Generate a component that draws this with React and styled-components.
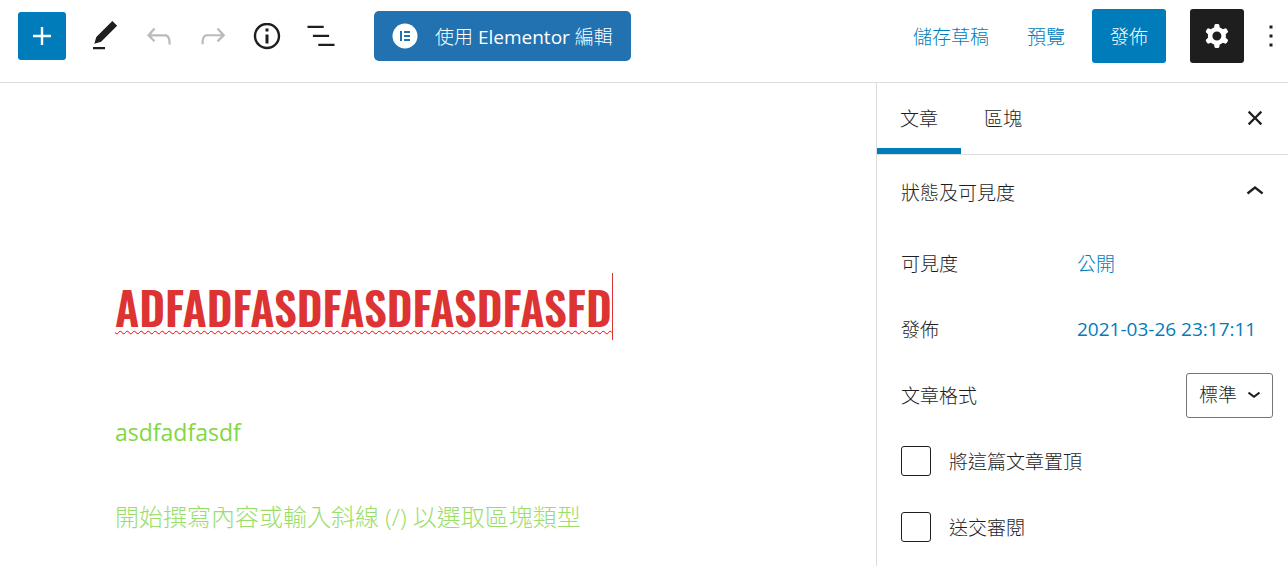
import React, { useState } from 'react';
import styled, { createGlobalStyle } from 'styled-components';

const icons = {
  plus: 'M18 11.2h-5.2V6h-1.6v5.2H6v1.6h5.2V18h1.6v-5.2H18z',
  edit: 'M20.1 5.1L16.9 2 6.2 12.7l-1.3 4.4 4.5-1.3L20.1 5.1zM4 20.8h8v-1.5H4v1.5z',
  undo: 'M18.3 11.7c-.6-.6-1.4-.9-2.3-.9H6.7l2.9-3.3-1.1-1-4.5 5L8.5 16l1-1-2.7-2.7H16c.5 0 .9.2 1.3.5 1 1 1 3.4 1 4.5v.3h1.5v-.2c0-1.5 0-4.3-1.5-5.7z',
  redo: 'M15.6 6.5l-1.1 1 2.9 3.3H8c-.9 0-1.7.3-2.3.9-1.4 1.5-1.4 4.2-1.4 5.6v.2h1.5v-.3c0-1.1 0-3.5 1-4.5.3-.3.7-.5 1.3-.5h9.2L14.5 15l1.1 1.1 4.6-4.6-4.6-5z',
  info: 'M12 3.2c-4.8 0-8.8 3.9-8.8 8.8 0 4.8 3.9 8.8 8.8 8.8 4.8 0 8.8-3.9 8.8-8.8 0-4.8-4-8.8-8.8-8.8zm0 16c-4 0-7.2-3.3-7.2-7.2C4.8 8 8 4.8 12 4.8s7.2 3.3 7.2 7.2c0 4-3.2 7.2-7.2 7.2zM11 17h2v-6h-2v6zm0-8h2V7h-2v2z',
  outline: 'M13.8 5.2H3v1.5h10.8V5.2zm-3.6 12v1.5H21v-1.5H10.2zm7.2-6H6.6v1.5h10.8v-1.5z',
  cog: 'M10.289 4.836A1 1 0 0111.275 4h1.306a1 1 0 01.987.836l.244 1.466c.787.26 1.503.679 2.108 1.218l1.393-.522a1 1 0 011.216.437l.653 1.13a1 1 0 01-.23 1.273l-1.148.944a6.025 6.025 0 010 2.435l1.149.946a1 1 0 01.23 1.272l-.653 1.13a1 1 0 01-1.216.437l-1.394-.522c-.605.54-1.32.958-2.108 1.218l-.244 1.466a1 1 0 01-.987.836h-1.306a1 1 0 01-.986-.836l-.244-1.466a5.995 5.995 0 01-2.108-1.218l-1.394.522a1 1 0 01-1.217-.436l-.653-1.131a1 1 0 01.23-1.272l1.149-.946a6.026 6.026 0 010-2.435l-1.148-.944a1 1 0 01-.23-1.272l.653-1.131a1 1 0 011.217-.437l1.393.522a5.994 5.994 0 012.108-1.218l.244-1.466zM14.929 12a3 3 0 11-6 0 3 3 0 016 0z',
  more: 'M13 19h-2v-2h2v2zm0-6h-2v-2h2v2zm0-6h-2V5h2v2z',
  close: 'M12 13.06l3.712 3.713 1.061-1.06L13.061 12l3.712-3.712-1.06-1.06L12 10.938 8.288 7.227l-1.061 1.06L10.939 12l-3.712 3.712 1.06 1.061L12 13.061z',
  chevronUp: 'M6.5 12.4L12 8l5.5 4.4-.9 1.2L12 10l-4.5 3.6-1-1.2z',
};

function Icon({ name }) {
  return (
    <IconSvg viewBox="0 0 24 24" aria-hidden="true">
      <path fillRule="evenodd" d={icons[name]} />
    </IconSvg>
  );
}

export default function App() {
  const [title, setTitle] = useState('ADFADFASDFASDFASDFASFD');
  const [texto, setTexto] = useState('');
  const [tab, setTab] = useState('post');
  const [panelOpen, setPanelOpen] = useState(true);
  const [sticky, setSticky] = useState(false);
  const [review, setReview] = useState(false);

  return (
    <>
      <GlobalStyle />
      <Editor>
        <Header>
          <InserterButton aria-label="新增區塊"><Icon name="plus" /></InserterButton>
          <Tools>
            <ToolButton aria-label="工具"><Icon name="edit" /></ToolButton>
            <ToolButton aria-label="復原" disabled><Icon name="undo" /></ToolButton>
            <ToolButton aria-label="重做" disabled><Icon name="redo" /></ToolButton>
            <ToolButton aria-label="詳細資料"><Icon name="info" /></ToolButton>
            <ToolButton aria-label="大綱"><Icon name="outline" /></ToolButton>
          </Tools>
          <ElementorButton>
            <ElementorLogo viewBox="0 0 26 26" aria-hidden="true">
              <circle cx="13" cy="13" r="12.5" fill="#fff" />
              <path fill="#2271b1" d="M8 8h2v10H8zM12 8h6v2h-6zM12 12h6v2h-6zM12 16h6v2h-6z" />
            </ElementorLogo>
            <span>使用 <Latin>Elementor</Latin> 編輯</span>
          </ElementorButton>
          <Settings>
            <TextButton>儲存草稿</TextButton>
            <TextButton>預覽</TextButton>
            <PublishButton>發佈</PublishButton>
            <CogButton aria-label="設定"><Icon name="cog" /></CogButton>
            <MoreButton aria-label="選項"><Icon name="more" /></MoreButton>
          </Settings>
        </Header>

        <Body>
          <Canvas>
            <TitleInput
              aria-label="新增標題"
              spellCheck={false}
              value={title}
              onChange={(e) => setTitle(e.target.value)}
            />
            <Paragraph>asdfadfasdf</Paragraph>
            <BlockInput
              aria-label="區塊"
              placeholder="開始撰寫內容或輸入斜線 (/) 以選取區塊類型"
              value={texto}
              onChange={(e) => setTexto(e.target.value)}
            />
          </Canvas>

          <Sidebar>
            <Tabs>
              <Tab $active={tab === 'post'} onClick={() => setTab('post')}>文章</Tab>
              <Tab $active={tab === 'block'} onClick={() => setTab('block')}>區塊</Tab>
              <CloseButton aria-label="關閉設定"><Icon name="close" /></CloseButton>
            </Tabs>

            <PanelTitle onClick={() => setPanelOpen(!panelOpen)}>
              狀態及可見度
              <Icon name="chevronUp" />
            </PanelTitle>

            {panelOpen && (
              <>
                <Row>
                  <RowLabel>可見度</RowLabel>
                  <LinkButton>公開</LinkButton>
                </Row>
                <Row>
                  <RowLabel>發佈</RowLabel>
                  <LinkButton><Latin>2021-03-26 23:17:11</Latin></LinkButton>
                </Row>
                <Row>
                  <RowLabel as="label" htmlFor="format">文章格式</RowLabel>
                  <SelectWrap>
                    <Select id="format" defaultValue="standard">
                      <option value="standard">標準</option>
                      <option value="image">圖片</option>
                    </Select>
                    <SelectArrow viewBox="0 0 12 8" aria-hidden="true">
                      <path d="M0.5 1.5l5.5 4.3 5.5-4.3" fill="none" stroke="#1e1e1e" strokeWidth="2" />
                    </SelectArrow>
                  </SelectWrap>
                </Row>
                <CheckRow>
                  <Checkbox type="checkbox" checked={sticky} onChange={() => setSticky(!sticky)} />
                  將這篇文章置頂
                </CheckRow>
                <CheckRow>
                  <Checkbox type="checkbox" checked={review} onChange={() => setReview(!review)} />
                  送交審閱
                </CheckRow>
              </>
            )}
          </Sidebar>
        </Body>
      </Editor>
    </>
  );
}

// Estilos
const GlobalStyle = createGlobalStyle`
  * {
    box-sizing: border-box;
  }

  body {
    margin: 0;
    background: #fff;
    color: #1e1e1e;
    overflow: hidden;
  }

  body, button, input, select {
    font-family: 'Open Sans', 'Noto Sans CJK TC', sans-serif;
    font-size: 19px;
    font-weight: 300;
  }
`;

const IconSvg = styled.svg`
  width: 36px;
  height: 36px;
  flex-shrink: 0;
  fill: currentColor;
`;

const Latin = styled.span`
  font-weight: 400;
`;

const Editor = styled.div`
  display: flex;
  flex-direction: column;
  height: 100vh;
`;

const Header = styled.header`
  display: flex;
  align-items: center;
  padding: 9px 0 19px 18px;
  border-bottom: 1px solid #ddd;
`;

const BaseButton = styled.button`
  display: flex;
  align-items: center;
  justify-content: center;
  flex-shrink: 0;
  padding: 0;
  border: none;
  background: none;
  color: #1e1e1e;
  white-space: nowrap;
  cursor: pointer;
`;

const InserterButton = styled(BaseButton)`
  width: 48px;
  height: 48px;
  border-radius: 3px;
  background: #007cba;
  color: #fff;
`;

const Tools = styled.div`
  display: flex;
  margin: 0 26px 0 12px;
`;

const ToolButton = styled(BaseButton)`
  width: 54px;
  height: 54px;

  &:disabled {
    color: #bbb;
    cursor: default;
  }
`;

const ElementorButton = styled(BaseButton)`
  height: 50px;
  gap: 17px;
  padding: 0 18px;
  border-radius: 5px;
  background: #2271b1;
  color: #fff;
`;

const ElementorLogo = styled.svg`
  width: 26px;
  height: 26px;
`;

const Settings = styled.div`
  display: flex;
  align-items: center;
  margin-left: auto;
`;

const TextButton = styled(BaseButton)`
  height: 54px;
  margin-right: 8px;
  padding: 0 15px;
  color: #007cba;
`;

const PublishButton = styled(BaseButton)`
  height: 54px;
  margin: 0 24px 0 4px;
  padding: 0 18px;
  border-radius: 3px;
  background: #007cba;
  color: #fff;
`;

const CogButton = styled(BaseButton)`
  width: 54px;
  height: 54px;
  border-radius: 3px;
  background: #1e1e1e;
  color: #fff;
`;

const MoreButton = styled(BaseButton)`
  width: 34px;
  height: 54px;
  margin-left: 10px;
`;

const Body = styled.div`
  display: flex;
  flex: 1;
  min-height: 0;
`;

const Canvas = styled.main`
  display: flex;
  flex: 1;
  flex-direction: column;
  align-items: flex-start;
  padding: 190px 40px 0 115px;
`;

const TitleInput = styled.input`
  field-sizing: content;
  max-width: 100%;
  height: 67px;
  padding: 0;
  border: none;
  border-right: 1px solid #dd3333;
  outline: none;
  background: none;
  color: #dd3333;
  font-family: Oswald, 'Liberation Sans Narrow', sans-serif;
  font-size: 45px;
  font-weight: 600;
  text-decoration: underline wavy #ff0000 1px;
  text-decoration-skip-ink: none;
  text-underline-offset: 3px;
`;

const Paragraph = styled.p`
  margin: 76px 0 0;
  color: #81d742;
  font-size: 23px;
  font-weight: 400;
  line-height: 32px;
`;

const BlockInput = styled.input`
  width: 100%;
  height: 40px;
  margin-top: 48px;
  padding: 0;
  border: none;
  outline: none;
  background: none;
  color: #81d742;
  font-size: 24px;

  &::placeholder {
    color: #81d742;
    opacity: 0.8;
  }
`;

const Sidebar = styled.aside`
  width: 412px;
  flex-shrink: 0;
  border-left: 1px solid #ddd;
`;

const Tabs = styled.div`
  display: flex;
  height: 72px;
  padding-right: 15px;
  border-bottom: 1px solid #ddd;
`;

const Tab = styled(BaseButton)`
  padding: 0 23px 2px;
  box-shadow: ${({ $active }) => ($active ? 'inset 0 -6px 0 #007cba' : 'none')};
`;

const CloseButton = styled(BaseButton)`
  margin-left: auto;
  padding-bottom: 2px;
`;

const PanelTitle = styled(BaseButton)`
  justify-content: space-between;
  width: 100%;
  height: 75px;
  padding: 0 15px 2px 24px;
`;

const Row = styled.div`
  display: flex;
  align-items: center;
  height: 66px;
  padding: 0 15px 0 24px;
`;

const RowLabel = styled.span`
  width: 176px;
`;

const LinkButton = styled(BaseButton)`
  color: #007cba;
`;

const SelectWrap = styled.div`
  display: grid;
  align-items: center;
  margin-left: auto;
`;

const Select = styled.select`
  grid-area: 1 / 1;
  width: 87px;
  height: 45px;
  padding: 0 12px;
  border: 1px solid #757575;
  border-radius: 3px;
  appearance: none;
  background: none;
  color: #1e1e1e;
`;

const SelectArrow = styled.svg`
  grid-area: 1 / 1;
  justify-self: end;
  width: 12px;
  height: 8px;
  margin-right: 13px;
  pointer-events: none;
`;

const CheckRow = styled.label`
  display: flex;
  align-items: center;
  gap: 18px;
  height: 66px;
  padding: 0 15px 0 24px;
`;

const Checkbox = styled.input`
  width: 30px;
  height: 30px;
  margin: 0;
  border: 1px solid #1e1e1e;
  border-radius: 3px;
  appearance: none;

  &:checked {
    background: #007cba;
  }
`;
